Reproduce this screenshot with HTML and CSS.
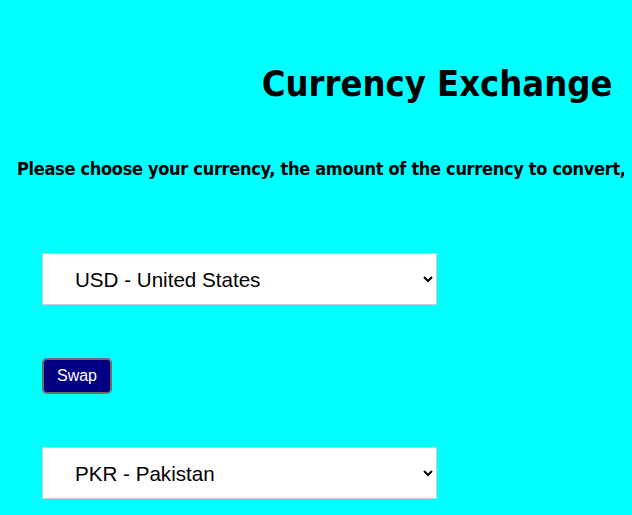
FILE: index.html
```html
<!DOCTYPE html>
<html>
<head>
<meta charset="utf-8">
<link rel="stylesheet" href="styles.css">
</head>
<body>
<div class="page">
  <h1 class="title">Currency Exchange</h1>
  <p class="intro">Please choose your currency, the amount of the currency to convert, and the currency you want to convert to.</p>
  <div class="form">
    <select class="currency">
      <option>USD - United States</option>
      <option>PKR - Pakistan</option>
    </select>
    <button class="swap">Swap</button>
    <select class="currency">
      <option>PKR - Pakistan</option>
      <option>USD - United States</option>
    </select>
  </div>
</div>
</body>
</html>
```
FILE: styles.css
```css
html, body {
  overflow: hidden;
}
body {
  margin: 8px;
  background: #00ffff;
  font-family: "Liberation Sans", Arial, sans-serif;
}
.page {
  width: 858px;
}
.title {
  font-family: "DejaVu Sans Condensed", "DejaVu Sans", sans-serif;
  font-stretch: condensed;
  font-weight: bold;
  font-size: 36px;
  text-align: center;
  margin: 54px 0 0;
  line-height: 44px;
}
.intro {
  font-family: "DejaVu Sans Condensed", "DejaVu Sans", sans-serif;
  font-stretch: condensed;
  font-weight: bold;
  font-size: 18px;
  letter-spacing: -0.3px;
  white-space: nowrap;
  margin: 53px 0 0 9px;
  line-height: 20px;
}
.form {
  display: flex;
  flex-direction: column;
  align-items: flex-start;
  padding: 74px 0 0 34px;
}
.currency {
  width: 395px;
  height: 52px;
  font-family: "Liberation Sans", Arial, sans-serif;
  font-size: 20.6px;
  padding: 0 0 0 28px;
  background: #fff;
  border: 1px solid #cccccc;
  border-radius: 0;
  color: #000;
}
.swap {
  margin: 53px 0 53px;
  width: 70px;
  height: 36px;
  background: #000080;
  color: #fff;
  border: 2px solid #6e6e6e;
  border-radius: 5px;
  font-family: "Liberation Sans", Arial, sans-serif;
  font-size: 16px;
  padding: 0;
}
```
